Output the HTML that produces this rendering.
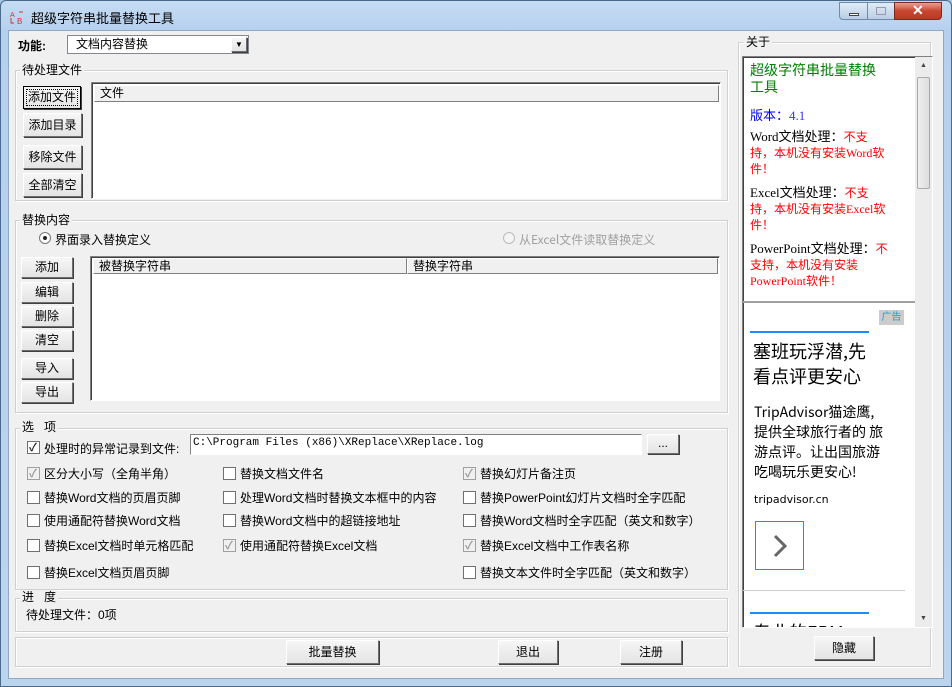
<!DOCTYPE html>
<html><head><meta charset="utf-8"><style>
*{box-sizing:border-box;margin:0;padding:0}
body{width:952px;height:687px;overflow:hidden;background:#a9c6e6;font-family:"Liberation Sans","Noto Sans CJK SC",sans-serif;font-size:12px;color:#000;position:relative}
.a{position:absolute}
.win{left:0;top:0;width:952px;height:687px;border:1px solid #4a6a8c;border-radius:6px 6px 0 0;background:linear-gradient(#c6dcf3,#b5d0ee 30px,#bcd5ef)}
.client{left:8px;top:30px;width:936px;height:649px;background:#f0f0f0;border:1px solid #8fa8c6}
.grp{border:1px solid #d0d0d0;box-shadow:inset 1px 1px 0 #fff,1px 1px 0 #fff}
.lbl{background:#f0f0f0;padding:0 2px;line-height:14px}
.btn{background:linear-gradient(#f6f6f6,#e4e4e4);border:1px solid;border-color:#fff #6e6e6e #6e6e6e #fff;box-shadow:1px 1px 0 #404040;text-align:center;font-size:12px}
.list{background:#fff;border:1px solid;border-color:#808080 #fff #fff #808080;box-shadow:inset 1px 1px 0 #404040}
.hdr{background:#f0f0f0;border:1px solid;border-color:#fff #808080 #808080 #fff;line-height:14px;padding-left:5px}
.cb{width:13px;height:13px;border:1px solid #707070;background:#fff}
.cb.g{background:#f0f0f0;border-color:#a0a0a0}
.ck::after{content:"✓";position:absolute;left:1px;top:-3px;font-size:11px;font-weight:bold;color:#222}
.cb.g.ck::after{color:#999}
.t{font-family:"Liberation Serif","Noto Sans CJK SC",serif;font-size:12px;white-space:nowrap}
</style></head><body>
<div class="a win"></div>
<svg class="a" style="left:9px;top:9px" width="16" height="16"><text x="1" y="8" font-size="7" fill="#c33">A</text><path d="M2 9v5h3M10 3h4" stroke="#c33" fill="none"/><text x="8" y="15" font-size="8" fill="#c33">B</text></svg>
<div class="a" style="left:31px;top:8px;font-size:13px">超级字符串批量替换工具</div>
<div class="a" style="left:839px;top:2px;width:29px;height:18px;border:1px solid #6c8cae;border-radius:0 0 0 4px;background:linear-gradient(#e0ecf8,#b9cde4)"><div class="a" style="left:9px;top:10px;width:10px;height:3px;background:#fff;border:1px solid #444"></div></div>
<div class="a" style="left:867px;top:2px;width:28px;height:18px;border:1px solid #6c8cae;background:linear-gradient(#e0ecf8,#b9cde4)"><div class="a" style="left:8px;top:4px;width:10px;height:8px;border:1px solid #99a"></div></div>
<div class="a" style="left:894px;top:2px;width:48px;height:18px;border:1px solid #7a2a20;border-radius:0 0 4px 0;background:linear-gradient(#e8a090,#c84630 50%,#b83a22)"><div class="a" style="left:17px;top:-1px;color:#fff;font-weight:bold;font-size:14px">✕</div></div>
<div class="a client"></div>

<div class="a" style="left:18px;top:37px;font-weight:bold">功能:</div>
<div class="a" style="left:67px;top:35px;width:182px;height:19px;background:#fff;border:1px solid #828790;padding-left:8px;line-height:17px">文档内容替换</div>
<div class="a btn" style="left:231px;top:37px;width:16px;height:15px;font-size:8px;line-height:13px">▼</div>

<div class="a grp" style="left:15px;top:70px;width:713px;height:131px"></div>
<div class="a lbl" style="left:20px;top:63px">待处理文件</div>
<div class="a btn" style="left:23px;top:86px;width:58px;height:23px;line-height:21px;outline:1px dotted #000;outline-offset:-4px;border-color:#000">添加文件</div>
<div class="a btn" style="left:23px;top:113px;width:59px;height:24px;line-height:22px">添加目录</div>
<div class="a btn" style="left:23px;top:145px;width:59px;height:24px;line-height:22px">移除文件</div>
<div class="a btn" style="left:23px;top:173px;width:59px;height:24px;line-height:22px">全部清空</div>
<div class="a list" style="left:91px;top:82px;width:630px;height:117px"><div class="hdr" style="margin:2px 1px 0 2px;height:17px">文件</div></div>

<div class="a grp" style="left:15px;top:220px;width:713px;height:193px"></div>
<div class="a lbl" style="left:20px;top:213px">替换内容</div>
<div class="a" style="left:39px;top:232px;width:12px;height:12px;border:1px solid #777;border-radius:50%;background:#fff"><div class="a" style="left:3px;top:3px;width:4px;height:4px;border-radius:50%;background:#222"></div></div>
<div class="a" style="left:55px;top:231px">界面录入替换定义</div>
<div class="a" style="left:503px;top:232px;width:12px;height:12px;border:1px solid #bbb;border-radius:50%;background:#f4f4f4"></div>
<div class="a t" style="left:519px;top:231px;color:#a0a0a0;font-family:'Noto Sans CJK SC',sans-serif">从Excel文件读取替换定义</div>
<div class="a btn" style="left:21px;top:257px;width:52px;height:21px;line-height:19px">添加</div>
<div class="a btn" style="left:21px;top:282px;width:52px;height:21px;line-height:19px">编辑</div>
<div class="a btn" style="left:21px;top:306px;width:52px;height:21px;line-height:19px">删除</div>
<div class="a btn" style="left:21px;top:330px;width:52px;height:21px;line-height:19px">清空</div>
<div class="a btn" style="left:21px;top:358px;width:52px;height:21px;line-height:19px">导入</div>
<div class="a btn" style="left:21px;top:382px;width:52px;height:21px;line-height:19px">导出</div>
<div class="a list" style="left:90px;top:256px;width:630px;height:145px"><div class="hdr a" style="left:2px;top:1px;width:314px;height:16px">被替换字符串</div><div class="hdr a" style="left:316px;top:1px;width:311px;height:16px">替换字符串</div></div>

<div class="a grp" style="left:15px;top:428px;width:713px;height:162px"></div>
<div class="a lbl" style="left:20px;top:420px">选&nbsp;&nbsp;&nbsp;项</div>
<div class="a cb ck" style="left:27px;top:441px"></div>
<div class="a" style="left:44px;top:440px">处理时的异常记录到文件:</div>
<div class="a list" style="left:190px;top:434px;width:452px;height:21px;font-family:'Liberation Mono',monospace;font-size:11px;padding:2px 0 0 2px;box-shadow:none">C:\Program Files (x86)\XReplace\XReplace.log</div>
<div class="a btn" style="left:647px;top:434px;width:32px;height:20px;line-height:16px">...</div>

<div class="a cb g ck" style="left:27px;top:467px"></div><div class="a" style="left:44px;top:465px">区分大小写（全角半角）</div>
<div class="a cb" style="left:223px;top:467px"></div><div class="a" style="left:240px;top:465px">替换文档文件名</div>
<div class="a cb g ck" style="left:463px;top:467px"></div><div class="a" style="left:480px;top:465px">替换幻灯片备注页</div>

<div class="a cb" style="left:27px;top:491px"></div><div class="a" style="left:44px;top:489px">替换Word文档的页眉页脚</div>
<div class="a cb" style="left:223px;top:491px"></div><div class="a" style="left:240px;top:489px">处理Word文档时替换文本框中的内容</div>
<div class="a cb" style="left:463px;top:491px"></div><div class="a" style="left:480px;top:489px">替换PowerPoint幻灯片文档时全字匹配</div>

<div class="a cb" style="left:27px;top:514px"></div><div class="a" style="left:44px;top:512px">使用通配符替换Word文档</div>
<div class="a cb" style="left:223px;top:514px"></div><div class="a" style="left:240px;top:512px">替换Word文档中的超链接地址</div>
<div class="a cb" style="left:463px;top:514px"></div><div class="a" style="left:480px;top:512px">替换Word文档时全字匹配（英文和数字）</div>

<div class="a cb" style="left:27px;top:539px"></div><div class="a" style="left:44px;top:537px">替换Excel文档时单元格匹配</div>
<div class="a cb g ck" style="left:223px;top:539px"></div><div class="a" style="left:240px;top:537px">使用通配符替换Excel文档</div>
<div class="a cb g ck" style="left:463px;top:539px"></div><div class="a" style="left:480px;top:537px">替换Excel文档中工作表名称</div>

<div class="a cb" style="left:27px;top:566px"></div><div class="a" style="left:44px;top:564px">替换Excel文档页眉页脚</div>
<div class="a cb" style="left:463px;top:566px"></div><div class="a" style="left:480px;top:564px">替换文本文件时全字匹配（英文和数字）</div>

<div class="a grp" style="left:15px;top:598px;width:713px;height:34px"></div>
<div class="a lbl" style="left:20px;top:590px">进&nbsp;&nbsp;&nbsp;度</div>
<div class="a" style="left:26px;top:606px">待处理文件：0项</div>

<div class="a grp" style="left:15px;top:637px;width:713px;height:30px"></div>
<div class="a btn" style="left:286px;top:640px;width:93px;height:24px;line-height:22px">批量替换</div>
<div class="a btn" style="left:498px;top:640px;width:60px;height:24px;line-height:22px">退出</div>
<div class="a btn" style="left:620px;top:640px;width:62px;height:24px;line-height:22px">注册</div>

<div class="a grp" style="left:738px;top:42px;width:193px;height:625px"></div>
<div class="a lbl" style="left:744px;top:35px">关于</div>
<div class="a list" style="left:742px;top:56px;width:191px;height:572px;overflow:hidden">
<div class="a" style="left:172px;top:0;width:17px;height:570px;background:#ececec"></div>
<div class="a" style="left:174px;top:20px;width:13px;height:112px;border:1px solid #aaa;border-radius:2px;background:linear-gradient(90deg,#eee,#ddd)"></div>
<div class="a" style="left:177px;top:5px;font-size:7px;color:#444">▲</div>
<div class="a" style="left:177px;top:558px;font-size:7px;color:#444">▼</div>
<div class="a t" style="left:7px;top:5px;color:#007f00;font-size:14px;font-family:'Noto Sans CJK SC',sans-serif;line-height:17px;white-space:normal;width:138px">超级字符串批量替换工具</div>
<div class="a t" style="left:7px;top:48px;color:#0000ff;font-size:13px">版本：<span style="color:#3333ff">4.1</span></div>
<div class="a t" style="left:7px;top:72px;font-size:13px;line-height:16px;white-space:normal;width:138px">Word文档处理：<span style="color:#f00;font-size:12px">不支持，本机没有安装Word软件！</span></div>
<div class="a t" style="left:7px;top:128px;font-size:13px;line-height:16px;white-space:normal;width:138px">Excel文档处理：<span style="color:#f00;font-size:12px">不支持，本机没有安装Excel软件！</span></div>
<div class="a t" style="left:7px;top:184px;font-size:13px;line-height:16px;white-space:normal;width:138px">PowerPoint文档处理：<span style="color:#f00;font-size:12px">不支持，本机没有安装PowerPoint软件！</span></div>
<div class="a" style="left:0;top:244px;width:172px;height:2px;background:#a0a0a0"></div>
<div class="a" style="left:136px;top:253px;width:25px;height:15px;background:#ccc;color:#19a0d8;font-size:10px;text-align:center;line-height:15px">广告</div>
<div class="a" style="left:7px;top:274px;width:119px;height:2px;background:#1a8cff"></div>
<div class="a" style="left:10px;top:282px;font-size:18px;line-height:25px;width:128px;font-family:'Noto Sans CJK SC',sans-serif">塞班玩浮潜,先看点评更安心</div>
<div class="a" style="left:11px;top:345px;font-size:14px;line-height:20px;width:130px;font-family:'Noto Sans CJK SC',sans-serif">TripAdvisor猫途鹰,提供全球旅行者的 旅游点评。让出国旅游吃喝玩乐更安心!</div>
<div class="a" style="left:11px;top:436px;font-size:11px;font-family:'DejaVu Sans',sans-serif">tripadvisor.cn</div>
<div class="a" style="left:12px;top:464px;width:49px;height:49px;border:1px solid #1a8cff"><svg width="47" height="47"><path d="M19 14l10 10-10 10" stroke="#666" stroke-width="3" fill="none"/></svg></div>
<div class="a" style="left:0;top:533px;width:162px;height:1px;background:#ccc"></div>
<div class="a" style="left:7px;top:555px;width:119px;height:2px;background:#1a8cff"></div>
<div class="a" style="left:10px;top:562px;font-size:18px;font-family:'Noto Sans CJK SC',sans-serif">专业的ERM</div>
</div>
<div class="a btn" style="left:814px;top:636px;width:60px;height:24px;line-height:22px">隐藏</div>
</body></html>
